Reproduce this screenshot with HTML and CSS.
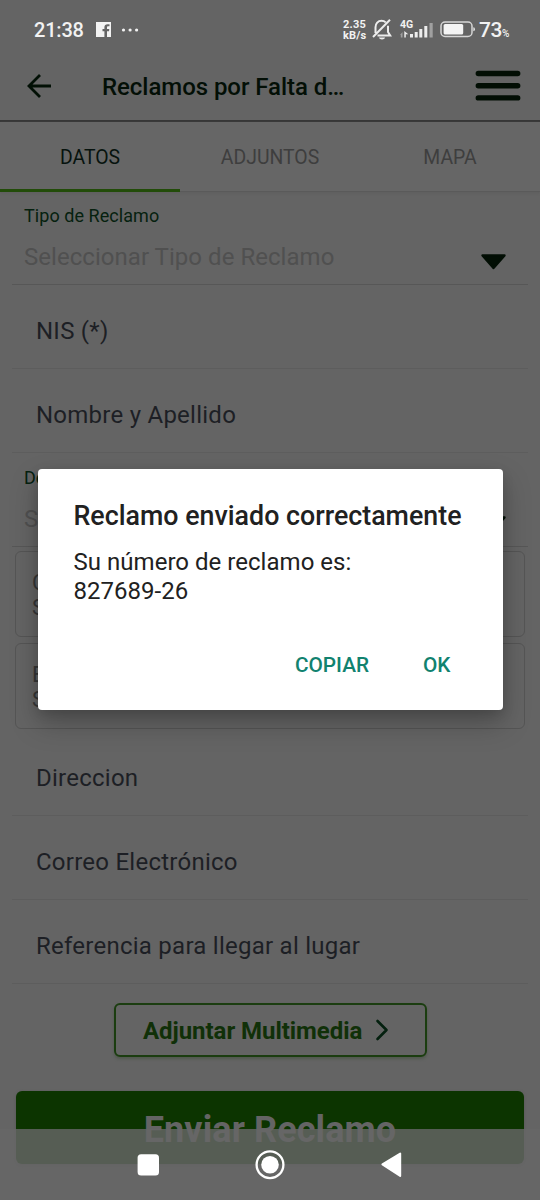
FILE: index.html
```html
<!DOCTYPE html>
<html lang="es">
<head>
<meta charset="utf-8">
<title>Reclamos</title>
<link rel="stylesheet" href="styles.css">
</head>
<body>
<div class="screen">
  <div class="status">
    <span class="clock">21:38</span>
    <svg class="fb" width="15" height="15" viewBox="0 0 15 15"><path fill="#f2f2f2" d="M0 0H15V15H11V9.3H13L13.3 7H11V5.6C11 4.8 11.3 4.3 12.2 4.3H13.5V2.2H11.6C9.5 2.2 8.4 3.3 8.4 5.2V7H6.5V9.3H8.4V15H0Z"/></svg>
    <svg class="more" width="18" height="4" viewBox="0 0 18 4"><g fill="#f2f2f2"><circle cx="2.5" cy="2" r="1.6"/><circle cx="9.1" cy="2" r="1.6"/><circle cx="15.6" cy="2" r="1.6"/></g></svg>
    <span class="speed"><span>2.35</span><span>kB/s</span></span>
    <svg class="bell" width="20" height="21" viewBox="0 0 20 21" fill="none" stroke="#ededed" stroke-width="2"><path d="M3.5 14V8.2C3.5 4.5 6 1.8 9.5 1.8C11.2 1.8 12.7 2.4 13.7 3.4M16 6.8V13L18.3 16.6H5.5M18 .8L1 18"/><path d="M7 18.5H13C12.6 20 11.5 20.4 10 20.4S7.4 20 7 18.5Z" fill="#ededed" stroke="none"/></svg>
    <span class="signal">
      <span class="net">4G</span>
      <svg width="34" height="17" viewBox="0 0 34 17"><g fill="#ededed"><path d="M4.3 10L8.3 13.2H5.8V16.5H4.3Z"/><rect x="10" y="13" width="3" height="3.5"/><rect x="14.7" y="11" width="3" height="5.5"/><rect x="19.3" y="8" width="3" height="8.5"/><rect x="24.3" y="5" width="3" height="11.5"/></g><g fill="#a0a0a0"><path d="M2.5 11V16.5H.8V14H0Z"/><rect x="29.5" y="2" width="3.2" height="14.5"/></g></svg>
    </span>
    <svg class="battery" width="36" height="17" viewBox="0 0 36 17"><rect x="1" y="1" width="31" height="14.4" rx="4" fill="none" stroke="#d6d6d6" stroke-width="1.5"/><rect x="3.6" y="3" width="19.6" height="10.6" rx="1.5" fill="#f4f4f4"/><path d="M33.3 6.2Q35 6.2 35 8.2T33.3 10.2Z" fill="#e0e0e0"/></svg>
    <span class="pct">73<small>%</small></span>
  </div>

  <header class="bar">
    <svg class="back" width="26" height="26" viewBox="0 0 26 26" fill="none" stroke="#021005" stroke-width="2.8"><path d="M25 13H3M14 2L3 13L14 24"/></svg>
    <h1 class="title">Reclamos por Falta d…</h1>
    <svg class="menu" width="46" height="32" viewBox="0 0 46 32" stroke="#020e04" stroke-width="5.4" stroke-linecap="round"><path d="M3.3 3.5H42.7M3.3 15.7H42.7M3.3 27.9H42.7"/></svg>
  </header>

  <nav class="tabs">
    <span class="tab active">DATOS</span>
    <span class="tab">ADJUNTOS</span>
    <span class="tab">MAPA</span>
  </nav>

  <main class="form">
    <div class="select first">
      <span class="label">Tipo de Reclamo</span>
      <span class="value"><span class="ph">Seleccionar Tipo de Reclamo</span>
        <svg class="caret" width="26" height="17" viewBox="0 0 26 17"><path d="M2.5 2.5H24.5L13.5 15Z" fill="#020e04" stroke="#020e04" stroke-width="2.4" stroke-linejoin="round"/></svg></span>
    </div>
    <div class="input"><span>NIS (*)</span></div>
    <div class="input"><span>Nombre y Apellido</span></div>
    <div class="select second">
      <span class="label">De</span>
      <span class="value"><span class="ph">Se</span>
        <svg class="caret" width="26" height="17" viewBox="0 0 26 17"><path d="M2.5 2.5H24.5L13.5 15Z" fill="#020e04" stroke="#020e04" stroke-width="2.4" stroke-linejoin="round"/></svg></span>
    </div>
    <div class="card"><span>C</span><span>S</span></div>
    <div class="card"><span>E</span><span>S</span></div>
    <div class="input after"><span>Direccion</span></div>
    <div class="input"><span>Correo Electrónico</span></div>
    <div class="input"><span>Referencia para llegar al lugar</span></div>
    <div class="attach"><span>Adjuntar Multimedia</span>
      <svg width="14" height="22" viewBox="0 0 14 22" fill="none" stroke="#04200f" stroke-width="2.6" stroke-linecap="round" stroke-linejoin="round"><path d="M2.5 2L11.5 11L2.5 20"/></svg></div>
    <div class="send"><span>Enviar Reclamo</span></div>
  </main>

  <div class="sysnav">
    <svg width="22" height="22" viewBox="0 0 22 22"><rect x=".6" y=".2" width="21.4" height="21.4" rx="3.5" fill="#fff"/></svg>
    <svg width="30" height="30" viewBox="0 0 30 30"><circle cx="15" cy="14.7" r="13.4" fill="none" stroke="#fff" stroke-width="2.3"/><circle cx="15" cy="14.7" r="8.8" fill="#fff"/></svg>
    <svg width="22" height="26" viewBox="0 0 22 26"><path d="M1.4 12.3L19.2 1.6V24Z" fill="#fff" stroke="#fff" stroke-width="2" stroke-linejoin="round"/></svg>
  </div>

  <div class="dialog">
    <h2 class="d-title">Reclamo enviado correctamente</h2>
    <p class="d-body">Su número de reclamo es:<br>827689-26</p>
    <div class="d-actions"><span>COPIAR</span><span>OK</span></div>
  </div>
</div>
</body>
</html>
```
FILE: styles.css
```css
* { box-sizing: border-box; }
body { margin: 0; background: #646464; font-family: Roboto, "Noto Sans", sans-serif; }
.screen { position: relative; width: 540px; height: 1200px; overflow: hidden; background: #646464; white-space: nowrap; }

.status { height: 52px; padding: 7px 29px 0 34px; display: flex; align-items: center; color: #f2f2f2; }
.clock { font-size: 20px; font-weight: 500; width: 50px; letter-spacing: -.2px; }
.fb { margin-left: 12px; }
.more { margin-left: 10px; }
.speed { margin-left: 204px; width: 24px; display: flex; flex-direction: column; font-size: 11px; line-height: 11px; font-weight: 700; letter-spacing: .2px; }
.bell { margin-left: 5px; }
.signal { position: relative; margin-left: 8px; width: 34px; height: 17px; }
.signal svg { display: block; }
.net { position: absolute; left: 0; top: -2px; font-size: 10.5px; line-height: 11px; font-weight: 700; }
.battery { margin-left: 6px; }
.pct { margin-left: 3px; font-size: 21px; font-weight: 500; letter-spacing: -.5px; }
.pct small { font-size: 10px; }

.bar { height: 70px; display: flex; align-items: center; padding: 0 19px 1px 26px; border-bottom: 2px solid #373737; }
.title { margin: 3px 0 0 50px; flex: 1; font-size: 24px; font-weight: 500; line-height: 30px; letter-spacing: -.05px; color: #030f06; }

.tabs { height: 70px; display: grid; grid-template-columns: repeat(3, 180px); background: #666; border-bottom: 1px solid #5a5a5a; box-shadow: 0 1px 2px #5e5e5e; }
.tab { height: 70px; display: flex; align-items: center; justify-content: center; font-size: 19.4px; color: #3e3e3e; border-bottom: 3px solid transparent; padding-top: 4px; }
.tab.active { color: #07130e; border-bottom-color: #224c09; }

.form { padding: 0 12px; color: #1d1f25; font-size: 24px; }
.select { display: flex; flex-direction: column; padding: 0 22px 0 12px; border-bottom: 1px solid #575757; }
.select.first { height: 93px; padding-top: 12px; }
.select.second { height: 94px; padding-top: 13px; }
.label { font-size: 18px; line-height: 24px; letter-spacing: .06px; color: #06210f; }
.value { display: flex; justify-content: space-between; align-items: center; height: 34px; margin-top: 12px; color: #505050; }
.first .ph { letter-spacing: .04px; }
.caret { margin-top: 8px; }
.input { height: 84px; padding: 8px 24px 0; display: flex; align-items: center; letter-spacing: .25px; border-bottom: 1px solid #5d5d5d; }
.input.after { height: 87px; padding-top: 12px; }
.card { height: 86px; margin: 4px 3px 0; padding: 18px 16px 0; display: flex; flex-direction: column; font-size: 22px; line-height: 25px; border: 1px solid #555; border-radius: 6px; color: #363636; }
.card + .card { margin-top: 6px; }
.attach { width: 313px; height: 54px; margin: 19px 0 0 102px; padding: 2px 36px 0 27px; display: flex; align-items: center; justify-content: space-between; border: 2px solid #1b3d10; border-radius: 6px; box-shadow: 0 2px 3px #50584d; color: #103008; font-weight: 700; letter-spacing: -.05px; }
.attach svg { margin-top: -3px; }
.send { height: 73px; margin: 34px 4px 0; display: flex; align-items: center; justify-content: center; background: #0c3400; border-radius: 6px; box-shadow: 0 1px 3px #555; color: #646464; font-size: 36px; font-weight: 700; letter-spacing: .1px; padding-top: 4px; }

.sysnav { position: absolute; inset: 1129px 0 0 0; display: flex; align-items: center; justify-content: space-between; padding: 0 137px; background: rgba(102, 102, 102, .82); }

.dialog { position: absolute; left: 37.5px; top: 469px; width: 465px; height: 241px; padding: 31px 36px 0; background: #fff; border-radius: 4px; box-shadow: 0 13px 28px rgba(0, 0, 0, .25), 0 4px 12px rgba(0, 0, 0, .12); color: #212121; }
.d-title { margin: 0; font-size: 26.8px; line-height: 32px; font-weight: 500; }
.d-body { margin: 16px 0 0; font-size: 24px; line-height: 28.5px; letter-spacing: .03px; }
.d-actions { display: flex; justify-content: flex-end; gap: 54px; margin: 47px 16px 0 0; font-size: 20.8px; line-height: 26px; font-weight: 500; color: #11826f; }
```
